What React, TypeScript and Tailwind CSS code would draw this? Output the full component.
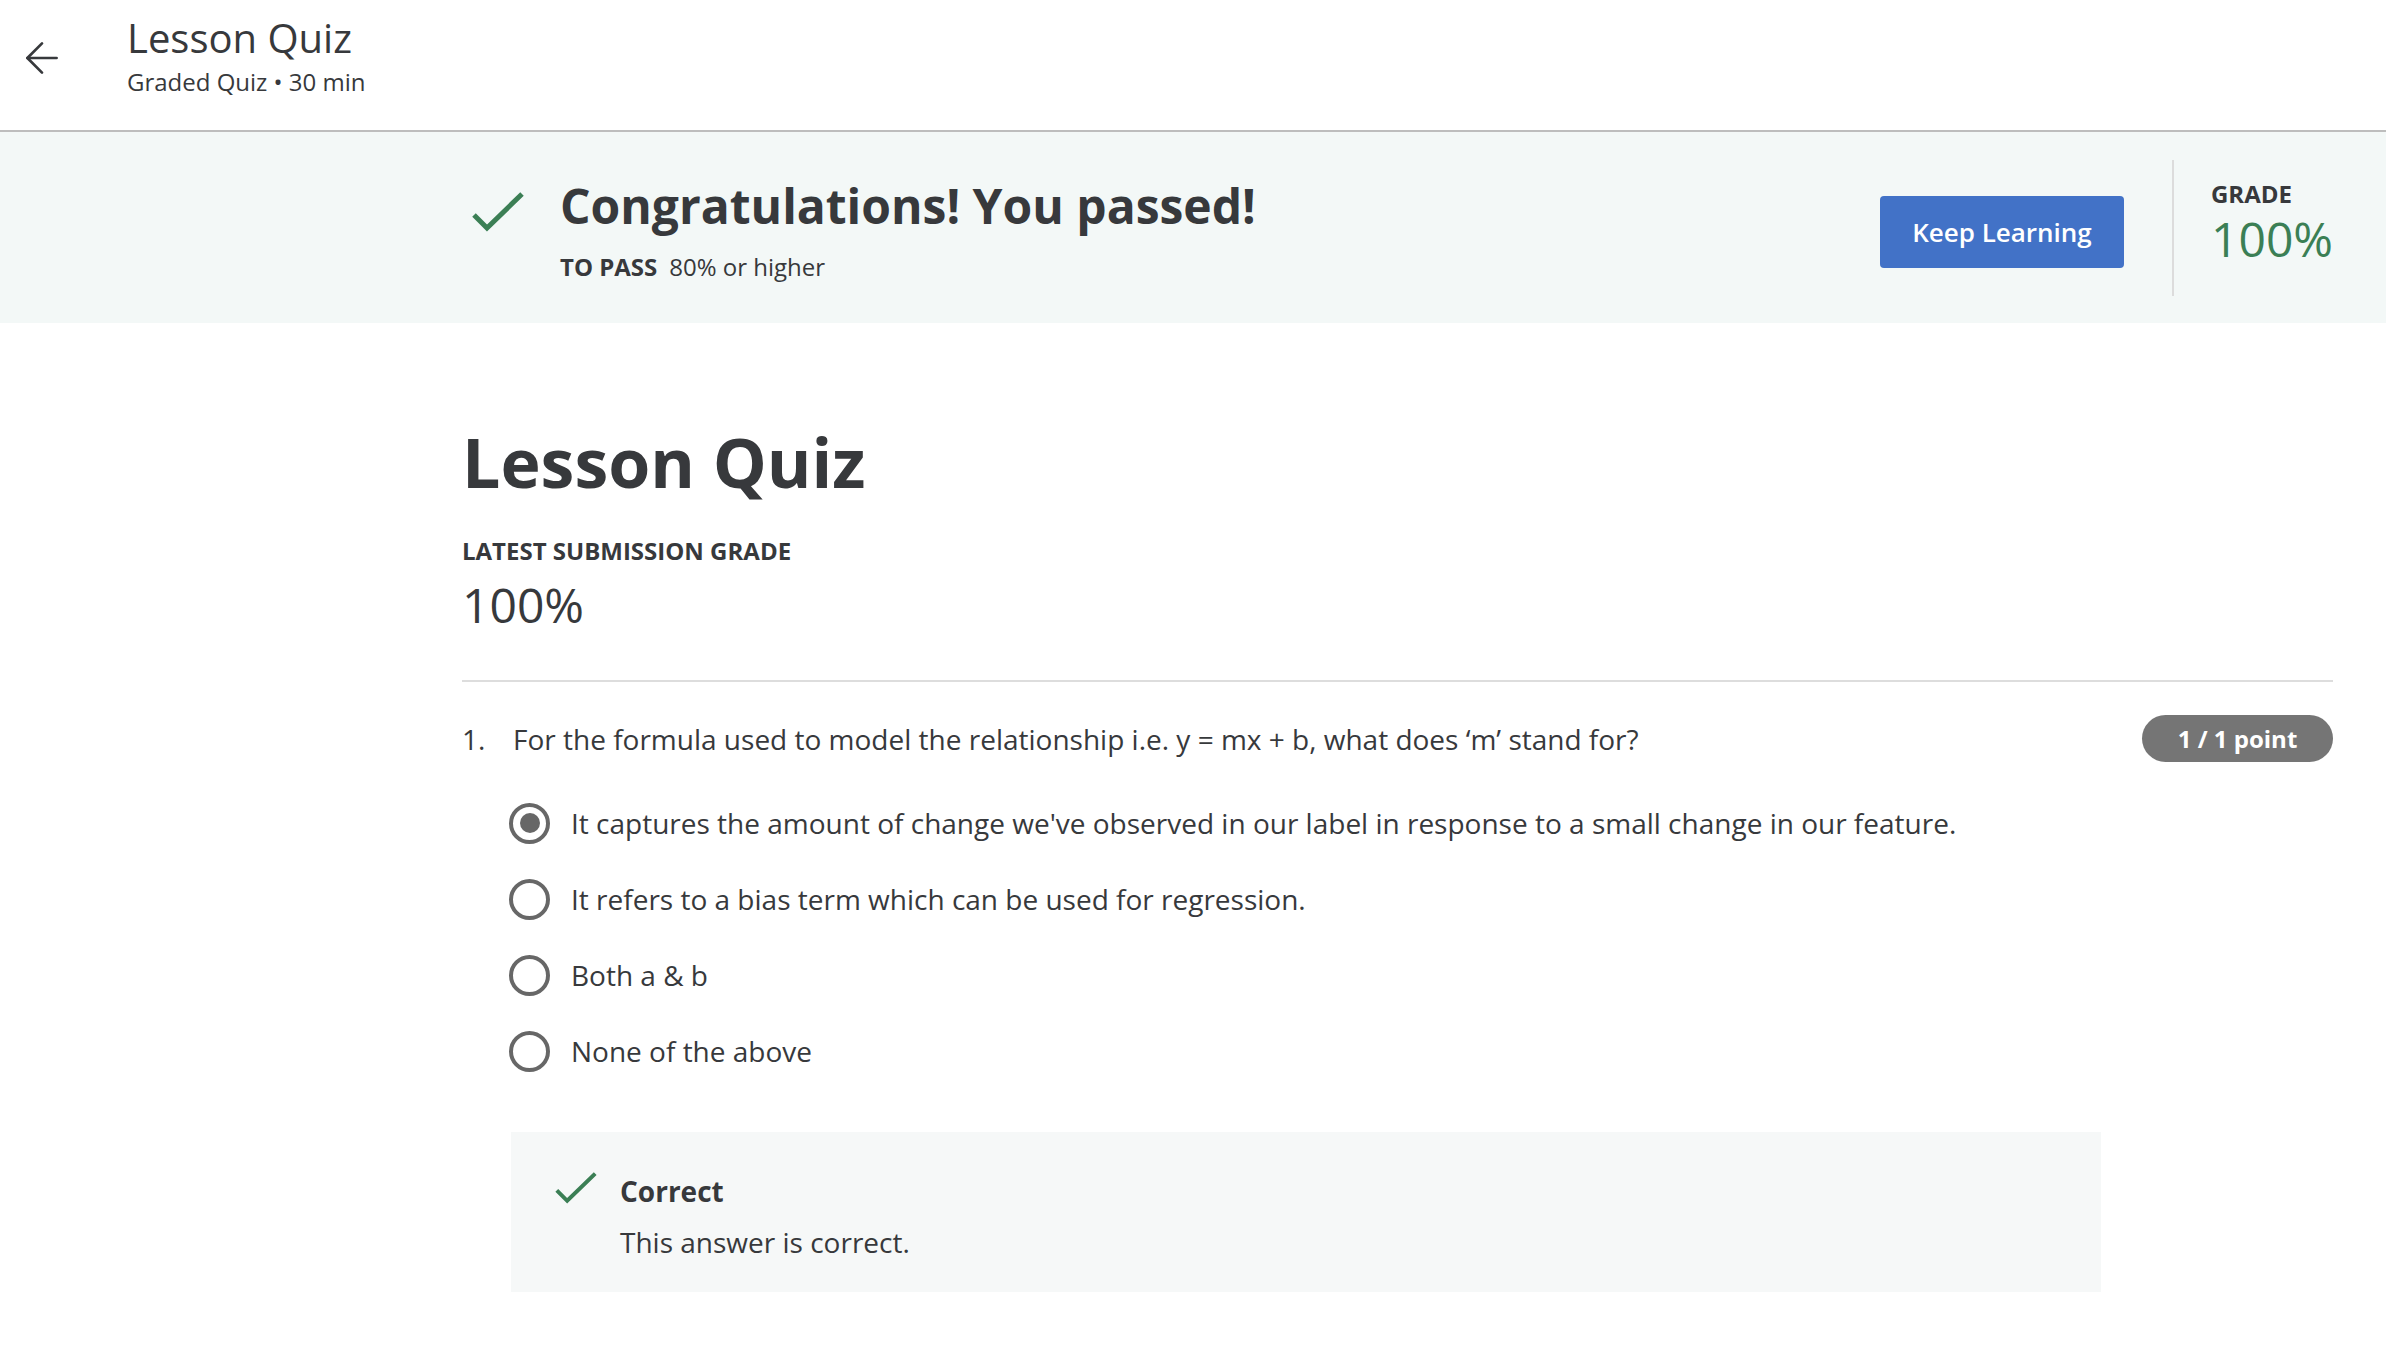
import { ArrowLeft } from 'lucide-react';

const font = { fontFamily: '"Open Sans", "Noto Sans", sans-serif' };

type Option = { label: string; selected?: boolean };

const options: Option[] = [
  {
    label:
      "It captures the amount of change we've observed in our label in response to a small change in our feature.",
    selected: true,
  },
  { label: 'It refers to a bias term which can be used for regression.' },
  { label: 'Both a & b' },
  { label: 'None of the above' },
];

function CheckMark({ className }: { className?: string }) {
  return (
    <svg viewBox="0 0 52 40" className={className} fill="none">
      <path d="M2 23 L15 36 L50 2" stroke="currentColor" strokeWidth="5" strokeLinecap="butt" strokeLinejoin="miter" />
    </svg>
  );
}

function Radio({ selected }: { selected?: boolean }) {
  return (
    <div className="w-[41px] h-[41px] rounded-full border-[4px] border-[#676767] flex items-center justify-center shrink-0">
      {selected && <div className="w-[20px] h-[20px] rounded-full bg-[#676767]" />}
    </div>
  );
}

export default function App() {
  return (
    <div style={font} className="min-h-[1358px] bg-white text-[#37393c]">
      {/* top bar */}
      <header className="h-[132px] border-b-2 border-[#bdbdbd] flex">
        <div className="w-[127px] pl-[17px] pt-[33px]">
          <ArrowLeft size={50} strokeWidth={1.3} className="text-[#37393c]" />
        </div>
        <div className="pt-[18px]">
          <div className="text-[40px] leading-[40px]">Lesson Quiz</div>
          <div className="text-[24px] leading-[24px] mt-[12px]">Graded Quiz • 30 min</div>
        </div>
      </header>

      {/* result banner */}
      <section className="bg-[#f3f8f7] h-[191px] pl-[472px] pr-[53px] flex">
        <div className="flex-1 flex pt-[59px]">
          <CheckMark className="w-[52px] h-[40px] text-[#3b7f55] mt-[1px]" />
          <div className="ml-[36px] -mt-[9px]">
            <div className="text-[48px] leading-[48px] font-bold">Congratulations! You passed!</div>
            <div className="text-[24px] leading-[24px] mt-[25px]">
              <span className="font-bold">TO PASS</span>
              <span className="ml-[12px]">80% or higher</span>
            </div>
          </div>
        </div>
        <div className="flex items-start">
          <button className="mt-[64px] w-[244px] h-[72px] rounded-[4px] bg-[#4272c7] text-white text-[26px] font-semibold">
            Keep Learning
          </button>
          <div className="ml-[48px] mt-[28px] w-[2px] h-[136px] bg-[#dcdcdc]" />
          <div className="ml-[37px] mt-[50px]">
            <div className="text-[24px] leading-[24px] font-bold">GRADE</div>
            <div className="text-[48px] leading-[48px] text-[#3b7f55] mt-[9px]">100%</div>
          </div>
        </div>
      </section>

      {/* quiz body */}
      <main className="pl-[462px] pr-[53px]">
        <h1 className="text-[68px] leading-[68px] font-bold mt-[105px]">Lesson Quiz</h1>
        <div className="text-[24px] leading-[24px] font-bold mt-[43px]">LATEST SUBMISSION GRADE</div>
        <div className="text-[48px] leading-[48px] mt-[18px]">100%</div>
        <div className="h-[2px] bg-[#dddddd] mt-[51px]" />

        <div className="flex items-center justify-between mt-[33px]">
          <div className="flex text-[28px] leading-[28px]">
            <span className="w-[51px]">1.</span>
            <span>For the formula used to model the relationship i.e. y = mx + b, what does ‘m’ stand for?</span>
          </div>
          <div className="w-[191px] h-[47px] rounded-full bg-[#757575] text-white text-[24px] font-bold flex items-center justify-center">
            1 / 1 point
          </div>
        </div>

        <div className="mt-[23px] pl-[47px]">
          {options.map((o) => (
            <div key={o.label} className="h-[76px] flex items-center gap-[21px]">
              <Radio selected={o.selected} />
              <span className="text-[28px] leading-[28px]">{o.label}</span>
            </div>
          ))}
        </div>

        <div className="ml-[49px] mr-[232px] mt-[43px] h-[160px] bg-[#f6f8f8] flex pl-[44px] pt-[40px]">
          <CheckMark className="w-[42px] h-[32px] text-[#3b7f55] shrink-0" />
          <div className="ml-[23px] pt-[5px]">
            <div className="text-[28px] leading-[28px] font-bold">Correct</div>
            <div className="text-[28px] leading-[28px] mt-[23px]">This answer is correct.</div>
          </div>
        </div>
      </main>
    </div>
  );
}
